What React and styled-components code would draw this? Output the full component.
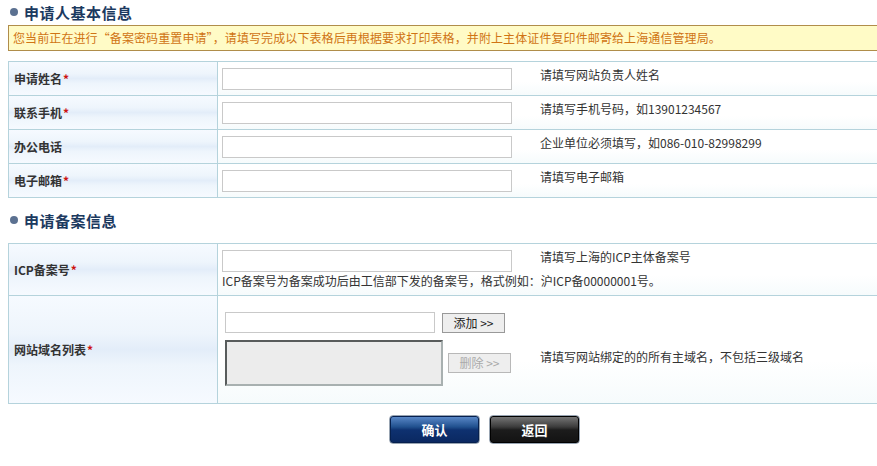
import styled, { createGlobalStyle } from 'styled-components';

const GlobalStyle = createGlobalStyle`
    html, body {
        margin: 0;
        padding: 0;
        background: #ffffff;
        overflow: hidden;
    }
    body {
        font-family: "Noto Sans CJK SC", "Liberation Sans", sans-serif;
        font-size: 12px;
        color: #333333;
    }
`;

const Page = styled.div`
    width: 953px;
    padding-left: 8px;
`;

const SectionTitle = styled.h2`
    display: flex;
    align-items: center;
    gap: 6px;
    margin: ${(p) => p.$gap || 0}px 0 0 2px;
    height: 24px;
    font-size: 15px;
    font-weight: 700;
    letter-spacing: 0.5px;
    color: #1c3a5f;

    &::before {
        content: '';
        width: 8px;
        height: 8px;
        border-radius: 50%;
        background: #5b7191;
    }
`;

const Notice = styled.div`
    margin-top: 1px;
    height: 24px;
    line-height: 24px;
    padding-left: 4px;
    border: 1px solid #b08d4a;
    background: #fffbc6;
    color: #d07414;
    letter-spacing: 0.1px;
    white-space: nowrap;
`;

const Table = styled.div`
    margin-top: ${(p) => p.$gap}px;
    border-top: 1px solid #b5d3dc;
`;

const Row = styled.div`
    display: flex;
    border-bottom: 1px solid #b5d3dc;
`;

const LabelCell = styled.div`
    width: 203px;
    flex-shrink: 0;
    display: flex;
    align-items: center;
    padding-left: 5px;
    border-left: 1px solid #b5d3dc;
    border-right: 1px solid #b5d3dc;
    font-weight: 700;
    color: #333333;
    background: linear-gradient(
        to bottom,
        #f6faff 0%,
        #eef5fc 35%,
        #e3edf9 50%,
        #eef5fc 65%,
        #f6faff 100%
    );
`;

const Star = styled.span`
    color: #cc1111;
    font-size: 12px;
    margin-left: 1px;
`;

const ValueCell = styled.div`
    flex: 1;
    padding: ${(p) => p.$pad || '6px 0 5px 4px'};
    background: linear-gradient(to bottom, #ffffff 60%, #f6fbfc 100%);
`;

const Line = styled.div`
    display: flex;
    align-items: flex-start;
`;

const FieldBox = styled.div`
    width: 318px;
    flex-shrink: 0;
`;

const TextInput = styled.input`
    box-sizing: border-box;
    display: block;
    width: ${(p) => p.$w || 290}px;
    height: ${(p) => p.$h || 22}px;
    margin: 0;
    border: 1px solid #c9c9c9;
    background: #ffffff;
`;

const Hint = styled.div`
    line-height: 14px;
    margin-top: ${(p) => p.$top || 0}px;
    color: #333333;
    white-space: nowrap;
`;

const Note = styled.div`
    margin-top: 2px;
    line-height: 14px;
    color: #333333;
    white-space: nowrap;
`;

const DomainBlock = styled.div`
    display: flex;
    flex-direction: column;
    gap: 7px;
    padding-left: 3px;
`;

const DomainLine = styled.div`
    display: flex;
    align-items: ${(p) => p.$align || 'flex-start'};
    gap: ${(p) => p.$gap}px;
`;

const ListBox = styled.div`
    box-sizing: border-box;
    width: 218px;
    height: 46px;
    border: 2px inset #a8b0b0;
    background: #ececec;
`;

const SmallButton = styled.button`
    box-sizing: border-box;
    width: 63px;
    height: 20px;
    margin-top: ${(p) => p.$top || 0}px;
    padding: 0;
    border: 1px solid ${(p) => (p.disabled ? '#b8b8b8' : '#999999')};
    background: #eeeeee;
    color: ${(p) => (p.disabled ? '#aaaaaa' : '#222222')};
    font-family: inherit;
    font-size: 12px;
    line-height: 18px;
`;

const Actions = styled.div`
    display: flex;
    justify-content: center;
    gap: 9px;
    margin-top: 11px;
`;

const ActionButton = styled.button`
    box-sizing: border-box;
    width: 91px;
    height: 29px;
    padding: 0;
    border: 1px solid #98a4b2;
    border-radius: 4px;
    color: #ffffff;
    font-family: inherit;
    font-size: 13px;
    font-weight: 700;
    background: ${(p) =>
        p.$dark
            ? 'linear-gradient(to bottom, #7a7a7a 0%, #3c3c3c 40%, #1c1c1c 52%, #121212 100%)'
            : 'linear-gradient(to bottom, #5e8ccc 0%, #21518f 40%, #0e3170 52%, #0a2860 100%)'};
    box-shadow: inset 0 0 0 1px ${(p) => (p.$dark ? '#000000' : '#06204e')};
`;

function FieldRow({ label, required, hint }) {
    return (
        <Row>
            <LabelCell>
                {label}
                {required && <Star>*</Star>}
            </LabelCell>
            <ValueCell>
                <Line>
                    <FieldBox>
                        <TextInput />
                    </FieldBox>
                    <Hint>{hint}</Hint>
                </Line>
            </ValueCell>
        </Row>
    );
}

const basicFields = [
    { label: '申请姓名', required: true, hint: '请填写网站负责人姓名' },
    { label: '联系手机', required: true, hint: '请填写手机号码，如13901234567' },
    { label: '办公电话', required: false, hint: '企业单位必须填写，如086-010-82998299' },
    { label: '电子邮箱', required: true, hint: '请填写电子邮箱' },
];

export default function App() {
    return (
        <Page>
            <GlobalStyle />
            <SectionTitle>申请人基本信息</SectionTitle>
            <Notice>
                您当前正在进行“备案密码重置申请”，请填写完成以下表格后再根据要求打印表格，并附上主体证件复印件邮寄给上海通信管理局。
            </Notice>

            <Table $gap={10}>
                {basicFields.map((f) => (
                    <FieldRow key={f.label} {...f} />
                ))}
            </Table>

            <SectionTitle $gap={10}>申请备案信息</SectionTitle>

            <Table $gap={11}>
                <Row>
                    <LabelCell>
                        ICP备案号<Star>*</Star>
                    </LabelCell>
                    <ValueCell $pad="6px 0 7px 4px">
                        <Line>
                            <FieldBox>
                                <TextInput />
                            </FieldBox>
                            <Hint>请填写上海的ICP主体备案号</Hint>
                        </Line>
                        <Note>
                            ICP备案号为备案成功后由工信部下发的备案号，格式例如：沪ICP备00000001号。
                        </Note>
                    </ValueCell>
                </Row>
                <Row>
                    <LabelCell>
                        网站域名列表<Star>*</Star>
                    </LabelCell>
                    <ValueCell $pad="16px 0 17px 4px">
                        <Line>
                            <FieldBox>
                                <DomainBlock>
                                    <DomainLine $gap={7}>
                                        <TextInput $w={210} $h={21} />
                                        <SmallButton type="button" $top={1}>
                                            添加 &gt;&gt;
                                        </SmallButton>
                                    </DomainLine>
                                    <DomainLine $gap={5} $align="center">
                                        <ListBox />
                                        <SmallButton type="button" disabled>
                                            删除 &gt;&gt;
                                        </SmallButton>
                                    </DomainLine>
                                </DomainBlock>
                            </FieldBox>
                            <Hint $top={38}>请填写网站绑定的的所有主域名，不包括三级域名</Hint>
                        </Line>
                    </ValueCell>
                </Row>
            </Table>

            <Actions>
                <ActionButton type="button">确认</ActionButton>
                <ActionButton type="button" $dark>
                    返回
                </ActionButton>
            </Actions>
        </Page>
    );
}
